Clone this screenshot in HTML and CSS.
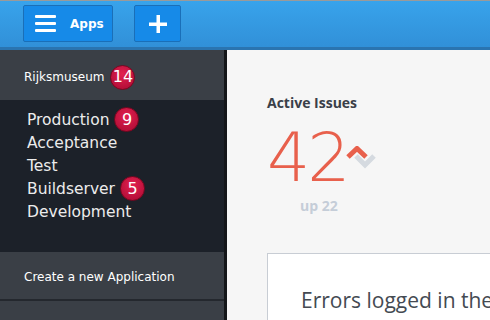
FILE: index.html
```html
<!DOCTYPE html>
<html>

<head>
    <title>Dashboard</title>
    <link rel="stylesheet" href="styles.css">
</head>

<body>
    <div class="topbar">
        <button class="top-button apps-button">
            <span class="burger"><i></i><i></i><i></i></span>
            <span class="apps-label">Apps</span>
        </button>
        <button class="top-button plus-button">
            <svg width="18" height="18" viewBox="0 0 18 18">
                <rect x="7.5" y="0" width="3.5" height="18" fill="#fff" />
                <rect x="0" y="7.5" width="18" height="3.5" fill="#fff" />
            </svg>
        </button>
    </div>

    <div class="main">
        <div class="sidebar">
            <div class="side-head">
                <span class="app-name">Rijksmuseum</span>
                <span class="badge">14</span>
            </div>
            <ul class="env-list">
                <li>Production <span class="badge">9</span></li>
                <li>Acceptance</li>
                <li>Test</li>
                <li>Buildserver <span class="badge">5</span></li>
                <li>Development</li>
            </ul>
            <div class="side-create">Create a new Application</div>
            <div class="side-rest"></div>
        </div>

        <div class="content">
            <div class="stat">
                <h3 class="stat-title">Active Issues</h3>
                <div class="stat-value">
                    <span class="stat-number">42</span>
                    <svg class="trend" width="34" height="28" viewBox="0 0 34 28">
                        <polyline points="11,10 20,19 29,10" fill="none" stroke="#d5dae0" stroke-width="5" />
                        <polyline points="3,11 12,2.5 21,11" fill="none" stroke="#e8604c" stroke-width="5" />
                    </svg>
                </div>
                <div class="stat-change">up 22</div>
            </div>
            <div class="card">
                <p class="card-title">Errors logged in the last 24 hours</p>
            </div>
        </div>
    </div>
</body>

</html>
```

FILE: styles.css
```css
body {
    margin: 0;
    font-family: "Open Sans", Arial, sans-serif;
    width: 490px;
    height: 320px;
    overflow: hidden;
    background: #f6f6f6;
}

.topbar {
    height: 50px;
    box-sizing: border-box;
    border-top: 1px solid #9a9a9a;
    border-bottom: 3px solid #2a74b0;
    background: linear-gradient(#38a3eb, #3190d8);
    display: flex;
    align-items: flex-start;
    gap: 21px;
    padding: 4px 0 0 23px;
}

.top-button {
    height: 37px;
    background: #168ae8;
    border: 1px solid #1a6fb8;
    border-radius: 2px;
    color: #fff;
    cursor: pointer;
    padding: 0;
    display: flex;
    align-items: center;
}

.apps-button {
    width: 90px;
    padding-left: 11px;
}

.burger {
    display: flex;
    flex-direction: column;
    gap: 4px;
    width: 21px;
}

.burger i {
    display: block;
    height: 3px;
    background: #fff;
    border-radius: 1px;
}

.apps-label {
    font-family: "DejaVu Sans", sans-serif;
    font-weight: bold;
    font-size: 12px;
    margin-left: 14px;
}

.plus-button {
    width: 47px;
    justify-content: center;
}

.main {
    display: flex;
    height: 270px;
}

.sidebar {
    width: 224px;
    border-right: 3px solid #141619;
    background: #1c2129;
    display: flex;
    flex-direction: column;
}

.side-head {
    height: 50px;
    background: #3a3f46;
    display: flex;
    align-items: center;
    padding: 4px 0 0 24px;
    gap: 6px;
    box-sizing: border-box;
}

.app-name,
.side-create {
    font-family: "DejaVu Sans", sans-serif;
    font-size: 12px;
    color: #fff;
}

.badge {
    display: inline-flex;
    align-items: center;
    justify-content: center;
    width: 25px;
    height: 25px;
    border-radius: 50%;
    background: radial-gradient(circle at 50% 35%, #e2204f, #a80a32);
    border: 1px solid #7a0620;
    box-sizing: border-box;
    color: #fff;
    font-family: "DejaVu Sans", sans-serif;
    font-size: 16px;
    padding-bottom: 1px;
}

.env-list {
    list-style: none;
    margin: 0;
    padding: 8px 0 0 27px;
    height: 152px;
    box-sizing: border-box;
}

.env-list li {
    font-family: "DejaVu Sans", sans-serif;
    font-size: 15.5px;
    color: #ececec;
    height: 23px;
    display: flex;
    align-items: center;
    gap: 5px;
}

.side-create {
    height: 49px;
    background: #3a3f46;
    border-bottom: 2px solid #24282e;
    padding: 2px 0 0 24px;
    display: flex;
    align-items: center;
    box-sizing: border-box;
}

.side-rest {
    flex: 1;
    background: #3a3f46;
}

.content {
    flex: 1;
    padding: 43px 0 0 40px;
    overflow: hidden;
}

.stat-title {
    margin: 0;
    font-family: "Open Sans", sans-serif;
    font-weight: bold;
    font-size: 14px;
    color: #3a3f48;
}

.stat-value {
    display: flex;
    align-items: flex-start;
    margin-top: 12px;
}

.stat-number {
    font-family: "DejaVu Sans", sans-serif;
    font-weight: 200;
    font-size: 68px;
    line-height: 68px;
    color: #e8604c;
    letter-spacing: -3px;
}

.trend {
    margin: 22px 0 0 -3px;
}

.stat-change {
    font-family: "Open Sans", sans-serif;
    font-weight: bold;
    font-size: 14px;
    color: #c5cdd8;
    margin: 4px 0 0 33px;
}

.card {
    margin-top: 38px;
    background: #fff;
    border: 1px solid #c8cdd4;
    border-right: none;
    height: 120px;
    padding: 32px 0 0 33px;
    white-space: nowrap;
}

.card-title {
    margin: 0;
    font-family: "Open Sans", sans-serif;
    font-size: 21px;
    color: #444a52;
}
```
